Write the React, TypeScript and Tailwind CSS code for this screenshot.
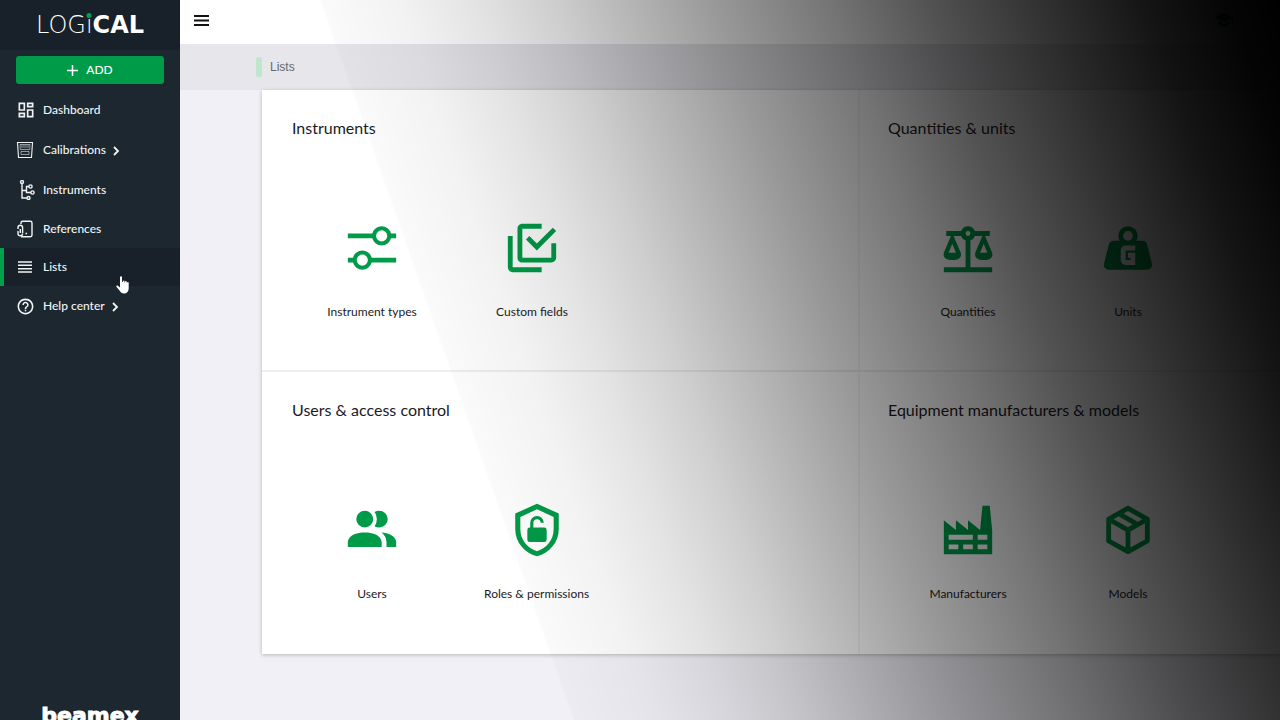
import type { ReactNode } from 'react'
import { MdHelpOutline, MdOutlineDashboard, MdSchool } from 'react-icons/md'

const PATHS = {
  types:
    'M2 6h10.13a4 4 0 0 1 7.74 0H22v2h-2.13a4 4 0 0 1-7.74 0H2zM16 4.7a2.3 2.3 0 1 0 0 4.6 2.3 2.3 0 0 0 0-4.6zM2 16h2.13a4 4 0 0 1 7.74 0H22v2H11.87a4 4 0 0 1-7.74 0H2zM8 14.7a2.3 2.3 0 1 0 0 4.6 2.3 2.3 0 0 0 0-4.6z',
  fields:
    'M20,16V10H22V16A2,2 0 0,1 20,18H8C6.89,18 6,17.1 6,16V4C6,2.89 6.89,2 8,2H16V4H8V16H20M10.91,7.08L14,10.17L20.59,3.58L22,5L14,13L9.5,8.5L10.91,7.08M16,20V22H4A2,2 0 0,1 2,20V7H4V20H16Z',
  scale:
    'M12,3C10.73,3 9.6,3.8 9.18,5H3V7H4.95L2,14C1.53,16 3,17 5.5,17C8,17 9.56,16 9,14L6.05,7H9.17C9.5,7.85 10.15,8.5 11,8.83V20H2V22H22V20H13V8.82C13.85,8.5 14.5,7.85 14.82,7H17.95L15,14C14.53,16 16,17 18.5,17C21,17 22.56,16 22,14L19.05,7H21V5H14.83C14.4,3.8 13.27,3 12,3M12,5A1,1 0 0,1 13,6A1,1 0 0,1 12,7A1,1 0 0,1 11,6A1,1 0 0,1 12,5M5.5,10.25L7,14H4L5.5,10.25M18.5,10.25L20,14H17L18.5,10.25Z',
  weight:
    'M12,3A4,4 0 0,1 16,7C16,7.73 15.81,8.41 15.46,9H18C18.95,9 19.75,9.67 19.95,10.56C21.96,18.57 22,18.78 22,19A2,2 0 0,1 20,21H4A2,2 0 0,1 2,19C2,18.78 2.04,18.57 4.05,10.56C4.25,9.67 5.05,9 6,9H8.54C8.19,8.41 8,7.73 8,7A4,4 0 0,1 12,3M12,5A2,2 0 0,0 10,7A2,2 0 0,0 12,9A2,2 0 0,0 14,7A2,2 0 0,0 12,5M15 11h-4a2 2 0 0 0-2 2v4a2 2 0 0 0 2 2h4v-5h-3v2h1v1h-2v-4h4z',
  users:
    'M16 17V19H2V17S2 13 9 13 16 17 16 17M12.5 7.5A3.5 3.5 0 1 0 9 11A3.5 3.5 0 0 0 12.5 7.5M15.94 13A5.32 5.32 0 0 1 18 17V19H22V17S22 13.37 15.94 13M15 4A3.39 3.39 0 0 0 13.07 4.59A5 5 0 0 1 13.07 10.41A3.39 3.39 0 0 0 15 11A3.5 3.5 0 0 0 15 4Z',
  roles:
    'M12 1.1 21 5.2V11.6C21 17.2 17.2 21.4 12 22.9 6.8 21.4 3 17.2 3 11.6V5.2zM12 3.4 5.1 6.6V11.6C5.1 16.2 8 19.5 12 20.8 16 19.5 18.9 16.2 18.9 11.6V6.6zM9.2 11V9A2.8 2.8 0 0 1 14.8 9H13.5A1.5 1.5 0 0 0 10.5 9V11H15A1 1 0 0 1 16 12V16A1 1 0 0 1 15 17H9A1 1 0 0 1 8 16V12A1 1 0 0 1 9 11z',
  factory:
    'M4,18V20H8V18H4M4,14V16H14V14H4M10,18V20H14V18H10M16,14V16H20V14H16M16,18V20H20V18H16M2,22V8L7,12V8L12,12V8L17,12L18,2H21L22,12V22H2Z',
  box: 'M21,16.5C21,16.88 20.79,17.21 20.47,17.38L12.57,21.82C12.41,21.94 12.21,22 12,22C11.79,22 11.59,21.94 11.43,21.82L3.53,17.38C3.21,17.21 3,16.88 3,16.5V7.5C3,7.12 3.21,6.79 3.53,6.62L11.43,2.18C11.59,2.06 11.79,2 12,2C12.21,2 12.41,2.06 12.57,2.18L20.47,6.62C20.79,6.79 21,7.12 21,7.5V16.5M12,4.15L10.11,5.22L16,8.61L17.96,7.5L12,4.15M6.04,7.5L12,10.85L13.96,9.75L8.08,6.35L6.04,7.5M5,15.91L11,19.29V12.58L5,9.21V15.91M19,15.91V9.21L13,12.58V19.29L19,15.91Z',
}

type IconName = keyof typeof PATHS

const SECTIONS: { title: string; items: { icon: IconName; label: string }[] }[] = [
  {
    title: 'Instruments',
    items: [
      { icon: 'types', label: 'Instrument types' },
      { icon: 'fields', label: 'Custom fields' },
    ],
  },
  {
    title: 'Quantities & units',
    items: [
      { icon: 'scale', label: 'Quantities' },
      { icon: 'weight', label: 'Units' },
    ],
  },
  {
    title: 'Users & access control',
    items: [
      { icon: 'users', label: 'Users' },
      { icon: 'roles', label: 'Roles & permissions' },
    ],
  },
  {
    title: 'Equipment manufacturers & models',
    items: [
      { icon: 'factory', label: 'Manufacturers' },
      { icon: 'box', label: 'Models' },
    ],
  },
]

function Chevron() {
  return (
    <svg viewBox="0 0 8 10" className="mt-0.5 ml-1.5 h-2.5 w-2" fill="none" stroke="currentColor" strokeWidth="1.8">
      <path d="M2 1l4 4-4 4" />
    </svg>
  )
}

function CalibrationIcon() {
  return (
    <svg viewBox="0 0 18 18" className="size-[18px]" fill="none" stroke="currentColor" strokeWidth="1.1">
      <path d="M1.5 1.5h15l-1 15h-13z" />
      <path d="M4 3.5h10l-.3 5H4.3zM6 4v3M8 4v3M10 4v3M12 4v3M5 10.5h8v3H5z" strokeWidth="0.7" opacity="0.8" />
    </svg>
  )
}

function TreeIcon() {
  return (
    <svg viewBox="0 0 18 20" className="ml-0.5 h-5 w-[18px]" fill="none" stroke="currentColor" strokeWidth="1.4">
      <circle cx="4" cy="2" r="1.5" />
      <circle cx="12.5" cy="6.5" r="1.6" />
      <circle cx="14.5" cy="12.5" r="1.6" />
      <circle cx="10.5" cy="18" r="1.5" />
      <path d="M4 3.5V18h5M4 10.5h4.5v-4H11M8.5 10.5v2H13" />
    </svg>
  )
}

function ReferenceIcon() {
  return (
    <svg viewBox="0 0 18 18" className="size-[18px]" fill="none" stroke="currentColor" strokeWidth="1.4">
      <path d="M5 4V3a1.7 1.7 0 0 1 1.7-1.7h7.6A1.7 1.7 0 0 1 16 3v12a1.7 1.7 0 0 1-1.7 1.7H5" />
      <path d="M2 9V7.5a2.3 2.3 0 0 1 4.6 0V13M2 11v2.5a2.3 2.3 0 0 0 4.6 0M4.3 9v4" />
      <path d="M9.5 13.5h1.6" strokeWidth="1.6" />
    </svg>
  )
}

function ListIcon() {
  return (
    <svg viewBox="0 0 14 12" className="mx-0.5 h-3 w-3.5" stroke="currentColor" strokeWidth="1.6">
      <path d="M0 1h14M0 4.3h14M0 7.7h14M0 11h14" />
    </svg>
  )
}

function NavItem({ icon, label, more }: { icon: ReactNode; label: string; more?: boolean }) {
  return (
    <a href="#" className="flex h-10 items-center pl-4">
      <span className="flex w-[27px] items-center">{icon}</span>
      {label}
      {more && <Chevron />}
    </a>
  )
}

function Sidebar() {
  return (
    <aside className="flex w-[180px] shrink-0 flex-col bg-[#1c272f] text-xs font-medium text-[#f1f4f5]">
      <div className="flex h-[50px] items-center justify-center bg-[#18212a] font-['DejaVu_Sans',sans-serif] text-2xl leading-none text-white">
        <span className="font-extralight">LOG</span>
        <span className="relative font-extralight">
          ı
          <span className="absolute top-0 left-1/2 size-[5px] -translate-x-1/2 rounded-full bg-[#00a14b]" />
        </span>
        <span className="font-bold">CAL</span>
      </div>
      <div className="px-4 py-1.5">
        <button className="flex h-7 w-full items-center justify-center gap-2 rounded-[3px] bg-[#009b48] text-white">
          <svg viewBox="0 0 11 11" className="size-[11px]" stroke="currentColor" strokeWidth="1.5">
            <path d="M5.5 0v11M0 5.5h11" />
          </svg>
          ADD
        </button>
      </div>
      <nav className="grow">
        <NavItem icon={<MdOutlineDashboard className="size-5" />} label="Dashboard" />
        <NavItem icon={<CalibrationIcon />} label="Calibrations" more />
        <NavItem icon={<TreeIcon />} label="Instruments" />
        <a href="#" className="flex h-[38px] items-center pl-4">
          <span className="flex w-[27px] items-center">
            <ReferenceIcon />
          </span>
          References
        </a>
        <a href="#" aria-current="page" className="flex h-[38px] items-center border-l-4 border-[#00a14b] bg-[#18212a] pl-3">
          <span className="flex w-[27px] items-center">
            <ListIcon />
          </span>
          Lists
        </a>
        <NavItem icon={<MdHelpOutline className="size-[19px]" />} label="Help center" more />
      </nav>
      <div className="-mb-2.5 text-center font-['DejaVu_Sans',sans-serif] text-[22px] leading-7 font-bold text-white [-webkit-text-stroke:1px_#fff]">
        beamex
      </div>
    </aside>
  )
}

function Section({ title, items }: (typeof SECTIONS)[number]) {
  return (
    <section className="h-[282px] border-b-[#eeeef0] border-l-[#f5f5f7] pt-[26px] pl-[30px] even:border-l-2 even:pl-7 [&:nth-child(-n+2)]:border-b-2">
      <h2 className="text-base">{title}</h2>
      <div className="mt-[79px] flex">
        {items.map(({ icon, label }) => (
          <a key={label} href="#" className="flex min-w-40 flex-col items-center gap-[25px] px-8 text-xs leading-5 whitespace-nowrap">
            <svg viewBox="0 0 24 24" className="size-[58px] fill-[#009b48]" fillRule="evenodd">
              <path d={PATHS[icon]} />
            </svg>
            {label}
          </a>
        ))}
      </div>
    </section>
  )
}

export default function App() {
  return (
    <div className="relative flex h-screen overflow-hidden bg-[#f0f0f6] font-['Lato',sans-serif] text-[#1b1b1f]">
      <Sidebar />
      <div className="relative min-w-0 grow overflow-hidden">
        <header className="flex h-11 items-center justify-between bg-white pr-[46px] pb-1 pl-3.5">
          <button aria-label="Toggle menu">
            <svg viewBox="0 0 15 11" className="h-[11px] w-[15px]" stroke="#111" strokeWidth="1.8">
              <path d="M0 1h15M0 5.5h15M0 10h15" />
            </svg>
          </button>
          <MdSchool className="size-5 text-[#00502a]" />
        </header>
        <div className="flex h-[46px] items-center gap-2 bg-[#e6e6eb] pl-[76px] font-['Liberation_Sans',sans-serif] text-xs text-[#66666b]">
          <span className="h-5 w-1.5 rounded-xs bg-[#bfe6cf]" />
          Lists
        </div>
        <main className="pl-[82px]">
          <div className="grid grid-cols-[596fr_422fr] bg-white shadow-[0_1px_4px_rgba(0,0,0,0.25)]">
            {SECTIONS.map(s => (
              <Section key={s.title} {...s} />
            ))}
          </div>
        </main>
        {/* dark sweep fading the view out towards the top right */}
        <div className="pointer-events-none absolute inset-0 bg-[linear-gradient(70.6deg,transparent_29%,rgba(0,0,0,0.02)_29.2%,rgba(0,0,0,0.05)_35%,rgba(0,0,0,0.11)_40.5%,rgba(0,0,0,0.19)_46%,rgba(0,0,0,0.4)_58%,rgba(0,0,0,0.55)_67%,rgba(0,0,0,0.68)_74%,rgba(0,0,0,0.82)_83%,rgba(0,0,0,0.92)_90%,rgba(0,0,0,0.98)_96%,#000)]" />
      </div>
      {/* pointer over the Lists entry */}
      <svg viewBox="0 0 13 18" className="pointer-events-none absolute top-[276px] left-[116px] h-[18px] w-[13px]" fill="#fff">
        <path d="M4 1.2a1 1 0 0 1 2 0V6l.8.1V5a.9.9 0 0 1 1.7 0v1.4h.5v-.8a.9.9 0 0 1 1.7 0v1.2h.4a.8.8 0 0 1 1.6 0V12c0 3-1.5 5.5-4.5 5.5-2.5 0-3.5-1-4.7-3L.4 10.8c-.6-1 .7-1.7 1.5-1L4 11.5z" />
      </svg>
    </div>
  )
}
